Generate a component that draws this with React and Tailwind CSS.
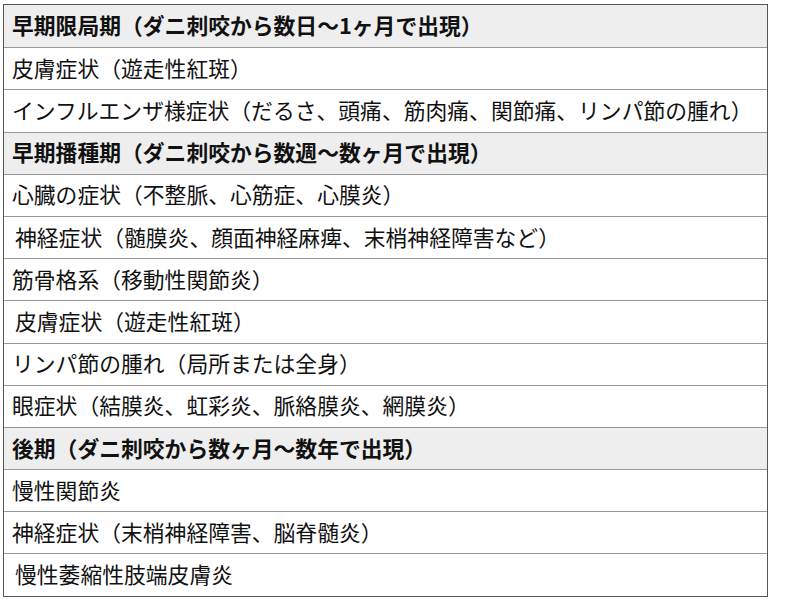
import React from 'react';

const rows = [
    { text: '早期限局期（ダニ刺咬から数日〜1ヶ月で出現）', head: true },
    { text: '皮膚症状（遊走性紅斑）' },
    { text: 'インフルエンザ様症状（だるさ、頭痛、筋肉痛、関節痛、リンパ節の腫れ）' },
    { text: '早期播種期（ダニ刺咬から数週〜数ヶ月で出現）', head: true },
    { text: '心臓の症状（不整脈、心筋症、心膜炎）' },
    { text: '神経症状（髄膜炎、顔面神経麻痺、末梢神経障害など）', indent: true },
    { text: '筋骨格系（移動性関節炎）' },
    { text: '皮膚症状（遊走性紅斑）', indent: true },
    { text: 'リンパ節の腫れ（局所または全身）' },
    { text: '眼症状（結膜炎、虹彩炎、脈絡膜炎、網膜炎）' },
    { text: '後期（ダニ刺咬から数ヶ月〜数年で出現）', head: true },
    { text: '慢性関節炎' },
    { text: '神経症状（末梢神経障害、脳脊髄炎）' },
    { text: '慢性萎縮性肢端皮膚炎', indent: true },
];

const App = () => {
    return (
        <div
            className="w-[800px] h-[600px] bg-white pt-[4px] pl-[3px]"
            style={{ fontFamily: '"Noto Sans CJK JP", "Noto Sans", sans-serif' }}
        >
            <div className="w-[765px] border border-[#555] flex flex-col">
                {rows.map((r, i) => (
                    <div
                        key={i}
                        className={
                            (i > 0 ? 'border-t border-[#999] ' : '') +
                            (r.head ? 'bg-[#eeeeee] font-bold ' : 'bg-white ') +
                            (r.indent ? 'pl-[11px] ' : 'pl-[8px] ') +
                            'h-[42.2px] flex items-center pb-[2px] text-[21.8px] text-[#111] leading-none whitespace-nowrap'
                        }
                    >
                        {r.text}
                    </div>
                ))}
            </div>
        </div>
    );
};

export default App;
